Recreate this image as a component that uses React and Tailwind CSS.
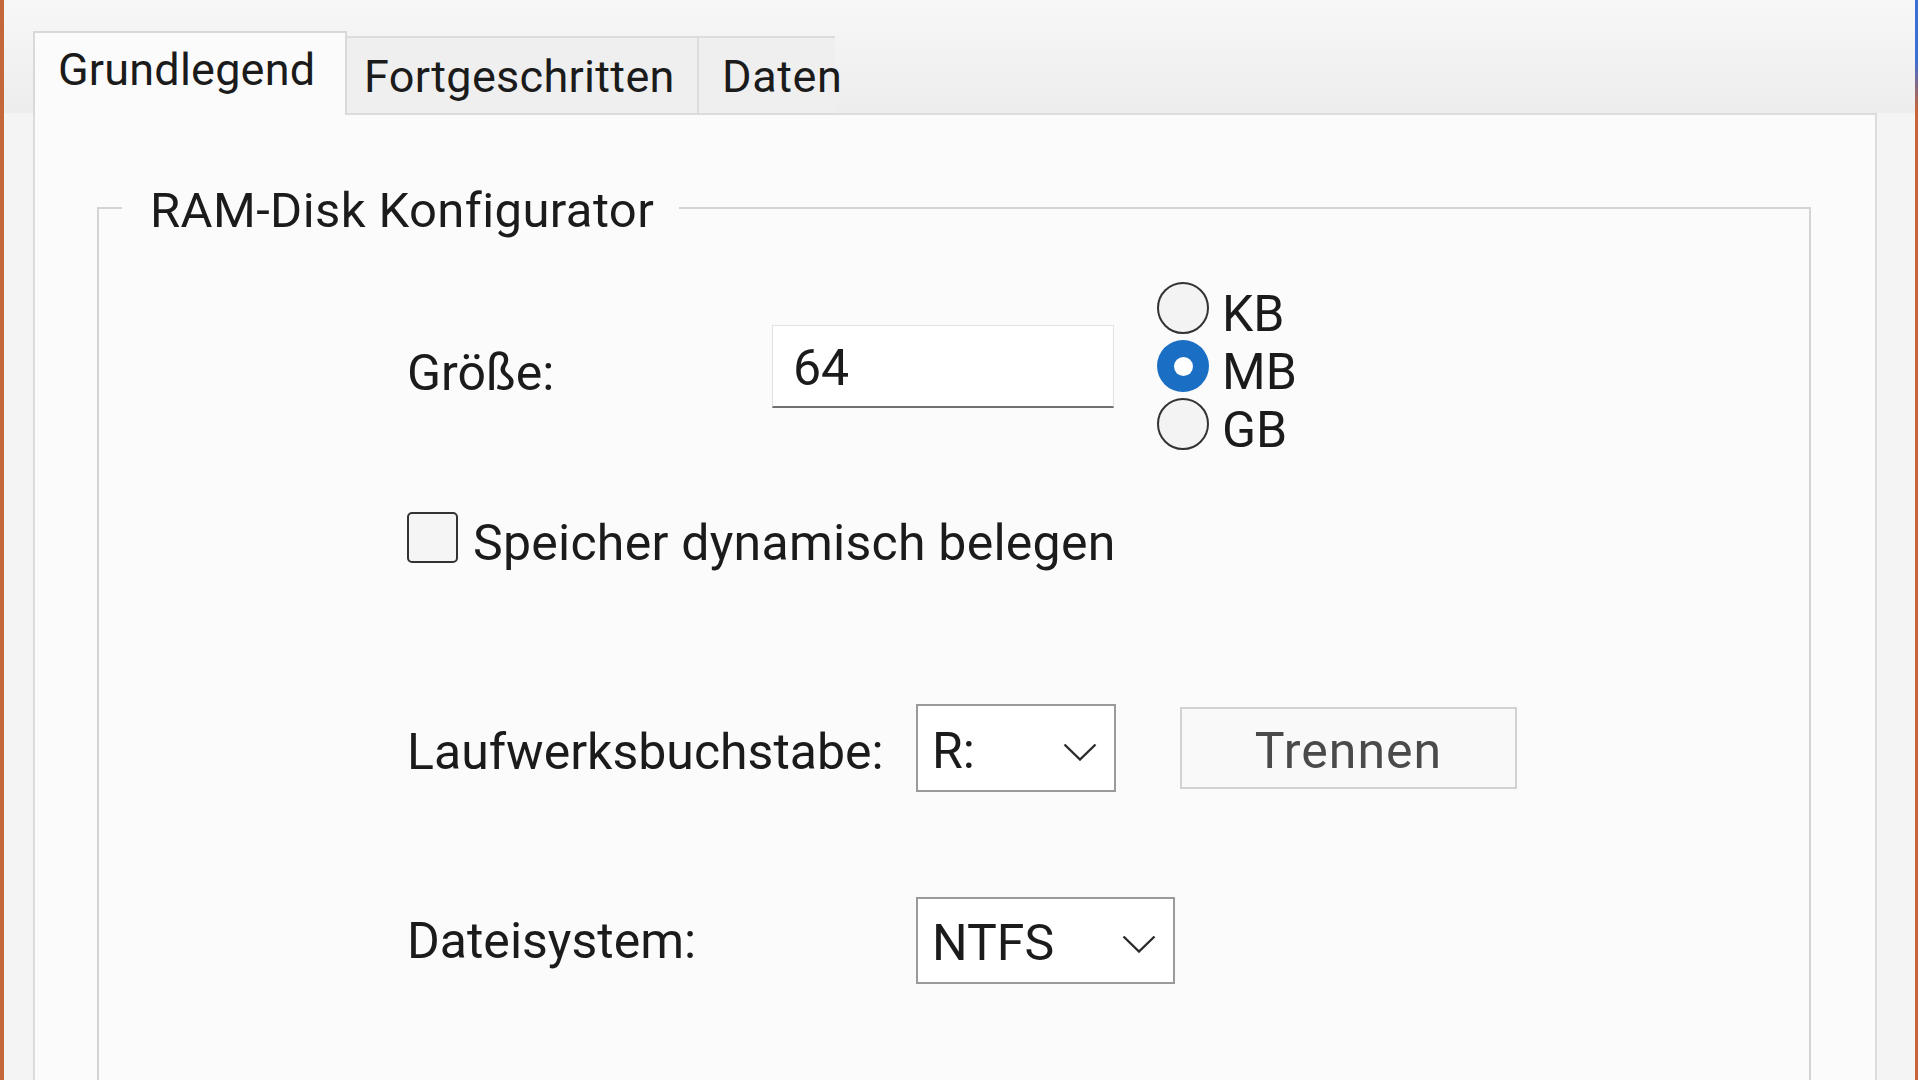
import React from "react";

function Chevron() {
  return (
    <svg width="34" height="18" viewBox="0 0 34 18" className="mt-[7px] shrink-0">
      <polyline points="1.5,1.5 17,16.5 32.5,1.5" fill="none" stroke="#2b2b2b" strokeWidth="2.4" />
    </svg>
  );
}

function Radio({ label, checked }) {
  return (
    <div className="flex h-[58px] items-center">
      {checked ? (
        <div className="flex h-[52px] w-[52px] items-center justify-center rounded-full bg-[#1a6fc4]">
          <div className="h-[19px] w-[19px] rounded-full bg-white" />
        </div>
      ) : (
        <div className="h-[52px] w-[52px] rounded-full border-2 border-[#333333] bg-[#f3f3f3]" />
      )}
      <span className="ml-[13px] pt-[11px] text-[50px] leading-[58px]">{label}</span>
    </div>
  );
}

export default function App() {
  return (
    <div className="flex h-[1080px] w-[1920px] overflow-hidden bg-[#f4f4f4] font-['Roboto',sans-serif] text-[#1b1b1b]">
      <div className="w-[4px] shrink-0 bg-[#c4683c]" />
      <div className="flex w-[1911px] shrink-0 flex-col">
        {/* Tab strip */}
        <div className="flex items-end bg-[linear-gradient(180deg,#f7f7f7,#ededed)] pl-[29px] pt-[31px]">
          <div className="relative z-10 -mb-[2px] h-[84px] w-[314px] border-2 border-b-0 border-[#d9d9d9] bg-[#fbfbfb] pl-[23px] pt-[14px] text-[45px] leading-none tracking-[0.2px] whitespace-nowrap">
            Grundlegend
          </div>
          <div className="h-[77px] w-[352px] border-t-2 border-r-2 border-[#dcdcdc] bg-[#efefef] pl-[17px] pt-[16px] text-[45px] leading-none tracking-[0.3px] whitespace-nowrap">
            Fortgeschritten
          </div>
          <div className="h-[77px] w-[136px] border-t-2 border-[#dcdcdc] bg-[#efefef] pl-[23px] pt-[16px] text-[45px] leading-none tracking-[0.6px] whitespace-nowrap">
            Daten
          </div>
        </div>

        {/* Panel */}
        <div className="ml-[29px] h-[1000px] w-[1844px] shrink-0 border-2 border-[#dcdcdc] bg-[#fbfbfb] pl-[62px] pr-[64px] pt-[92px]">
          <div className="relative border-2 border-[#d4d4d4] pb-[200px] pl-[308px] pt-[70px]">
            <div className="absolute -top-[23px] left-[23px] bg-[#fbfbfb] pl-[28px] pr-[25px] text-[49px] leading-none tracking-[0.4px] whitespace-nowrap">
              RAM-Disk Konfigurator
            </div>

            {/* Row 1: size */}
            <div className="flex h-[174px] items-center">
              <div className="w-[365px] pt-[13px] text-[50px] leading-none">Größe:</div>
              <div className="flex h-[83px] w-[342px] items-center border border-b-2 border-[#e2e2e2] border-b-[#707070] bg-white pl-[20px] text-[50px] leading-none">
                <span className="pt-[4px]">64</span>
              </div>
              <div className="ml-[43px] flex flex-col">
                <Radio label="KB" />
                <Radio label="MB" checked />
                <Radio label="GB" />
              </div>
            </div>

            {/* Row 2: checkbox */}
            <div className="mt-[59px] flex h-[51px] items-center">
              <div className="h-[51px] w-[51px] rounded-[5px] border-2 border-[#333333] bg-[#f5f5f5]" />
              <span className="ml-[15px] pt-[10px] text-[50px] leading-none tracking-[0.25px] whitespace-nowrap">
                Speicher dynamisch belegen
              </span>
            </div>

            {/* Row 3: drive letter */}
            <div className="mt-[141px] flex h-[88px] items-center">
              <div className="w-[509px] pt-[7px] text-[50px] leading-none whitespace-nowrap">Laufwerksbuchstabe:</div>
              <div className="flex h-[88px] w-[200px] items-center justify-between border-2 border-[#9a9a9a] bg-white pl-[14px] pr-[17px]">
                <span className="pt-[6px] text-[50px] leading-none">R:</span>
                <Chevron />
              </div>
              <div className="ml-[64px] flex h-[82px] w-[337px] items-center justify-center border-2 border-[#d2d2d2] bg-[#f9f9f9] text-[50px] leading-none tracking-[1px] text-[#4a4a4a]">
                <span className="pt-[6px]">Trennen</span>
              </div>
            </div>

            {/* Row 4: file system */}
            <div className="mt-[105px] flex h-[87px] items-center">
              <div className="w-[509px] text-[50px] leading-none whitespace-nowrap">Dateisystem:</div>
              <div className="flex h-[87px] w-[259px] items-center justify-between border-2 border-[#9a9a9a] bg-white pl-[14px] pr-[17px]">
                <span className="pt-[5px] text-[50px] leading-none">NTFS</span>
                <Chevron />
              </div>
            </div>
          </div>
        </div>
      </div>
      <div className="w-[3px] shrink-0 bg-[linear-gradient(180deg,#3a6fd6_0px,#3a6fd6_60px,#c8643a_110px,#c8643a_100%)]" />
      <div className="flex-1 bg-white" />
    </div>
  );
}
